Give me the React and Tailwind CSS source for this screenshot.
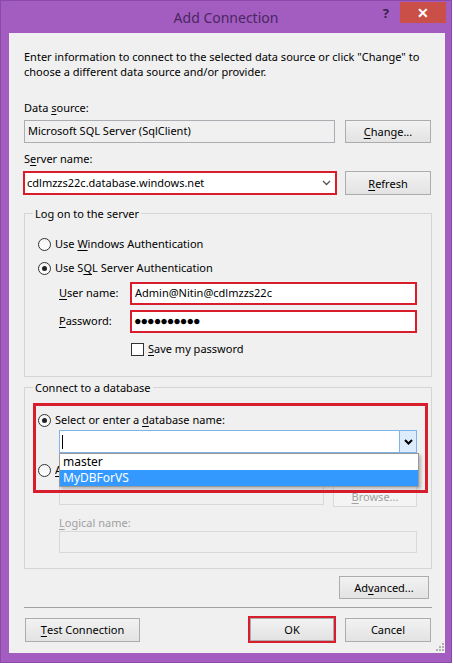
import React from 'react';

const FONT = "font-['Noto_Sans','Open_Sans',sans-serif]";

function U({ children }) {
  return <span className="underline underline-offset-[2px] decoration-[1px]">{children}</span>;
}

function Btn({ children, className = '', disabled }) {
  return (
    <div
      className={`flex items-center justify-center border leading-none ${
        disabled
          ? 'border-[#d9d9d9] bg-[#f4f4f4] text-[#a0a0a0]'
          : 'border-[#acacac] bg-linear-to-b from-[#f2f2f2] to-[#e3e3e3] text-black'
      } ${className}`}
    >
      {children}
    </div>
  );
}

function Radio({ checked }) {
  return (
    <span className="flex h-[13px] w-[13px] shrink-0 items-center justify-center rounded-full border border-[#333] bg-linear-to-b from-[#f4f4f4] to-white">
      {checked && <span className="h-[5px] w-[5px] rounded-full bg-[#222]" />}
    </span>
  );
}

function Chevron({ className = '', bold }) {
  return (
    <svg width="9" height="6" viewBox="0 0 9 6" className={className}>
      <path
        d="M1 1 L4.5 4.5 L8 1"
        fill="none"
        stroke="currentColor"
        strokeWidth={bold ? 2 : 1.3}
      />
    </svg>
  );
}

export default function App() {
  return (
    <div className={`h-[667px] w-[453px] bg-white text-[11px] text-black ${FONT}`}>
      <div className="flex h-[663px] w-[452px] flex-col border border-[#8c4aa8] bg-[#a35cc0]">
        {/* Title bar */}
        <div className="relative flex h-[32px] shrink-0 items-start">
          <div className="flex-1 pt-[7px] text-center text-[14px] leading-[20px] text-[#4a2760]">
            Add Connection
          </div>
          <div className="absolute right-[62px] top-[3px] text-[13px] font-bold leading-[18px] text-[#3a1f4c]">?</div>
          <div className="absolute right-[5px] top-[1px] flex h-[21px] w-[46px] items-center justify-center bg-[#c94f48] text-[14px] font-bold leading-none text-white">
            ✕
          </div>
        </div>

        {/* Client area */}
        <div className="ml-[8px] flex h-[620px] w-[436px] flex-col bg-[#f0f0f0] pl-[15px] pr-[13px]">
          <p className="mt-[16px] whitespace-nowrap leading-[15px]">
            Enter information to connect to the selected data source or click "Change" to
            <br />
            choose a different data source and/or provider.
          </p>

          <div className="mt-[21px] leading-[15px]">
            Data <U>s</U>ource:
          </div>
          <div className="mt-[5px] flex h-[23px] items-stretch">
            <div className="flex w-[311px] items-center border border-[#abadb3] bg-[#f0f0f0] pl-[3px]">
              Microsoft SQL Server (SqlClient)
            </div>
            <Btn className="ml-auto mr-[1px] w-[86px]">
              <U>C</U>hange...
            </Btn>
          </div>

          <div className="mt-[8px] leading-[15px]">
            S<U>e</U>rver name:
          </div>
          <div className="mt-[5px] flex h-[24px] items-stretch">
            <div className="-ml-[1px] flex w-[314px] items-center border-2 border-[#d81e2c] bg-white pl-[2px] pr-[4px]">
              <span className="flex-1">cdlmzzs22c.database.windows.net</span>
              <Chevron className="text-[#555]" />
            </div>
            <Btn className="ml-auto mr-[1px] w-[86px]">
              <U>R</U>efresh
            </Btn>
          </div>

          {/* Log on group */}
          <fieldset className="mt-[11px] border border-[#d5d5d5] px-[13px] pb-[20px]">
            <legend className="-ml-[5px] px-[2px] leading-[15px]">Log on to the server</legend>
            <div className="mt-[15px] flex h-[16px] items-center gap-[4px]">
              <Radio />
              <span>
                Use <U>W</U>indows Authentication
              </span>
            </div>
            <div className="mt-[8px] flex h-[16px] items-center gap-[4px]">
              <Radio checked />
              <span>
                Use S<U>Q</U>L Server Authentication
              </span>
            </div>
            <div className="mt-[6px] flex h-[23px] items-center">
              <span className="ml-[21px] w-[72px]">
                <U>U</U>ser name:
              </span>
              <div className="-ml-[1px] flex h-full w-[287px] items-center border-2 border-[#d81e2c] bg-white pl-[3px]">
                Admin@Nitin@cdlmzzs22c
              </div>
            </div>
            <div className="mt-[5px] flex h-[23px] items-center">
              <span className="ml-[21px] w-[72px]">
                <U>P</U>assword:
              </span>
              <div className="-ml-[1px] flex h-full w-[287px] items-center border-2 border-[#d81e2c] bg-white pl-[2px] text-[12.5px] tracking-[-1px]">
                ●●●●●●●●●●
              </div>
            </div>
            <div className="mt-[9px] ml-[93px] flex h-[14px] items-center gap-[4px]">
              <span className="h-[13px] w-[13px] border border-[#333] bg-white" />
              <span>
                <U>S</U>ave my password
              </span>
            </div>
          </fieldset>

          {/* Connect group */}
          <fieldset className="relative mt-[3px] border border-[#d5d5d5] px-[13px] pb-[15px]">
            <legend className="-ml-[5px] px-[2px] leading-[15px]">Connect to a database</legend>

            <div className="mt-[17px] flex h-[16px] items-center gap-[4px]">
              <Radio checked />
              <span>
                Select or enter a <U>d</U>atabase name:
              </span>
            </div>
            <div className="relative z-10 mt-[2px] ml-[21px] flex h-[23px] w-[358px] items-stretch border border-[#7eb4ea] bg-white">
              <span className="ml-[2px] mt-[4px] h-[14px] w-[1px] bg-black" />
              <div className="ml-auto flex w-[17px] items-center justify-center border-l border-[#7eb4ea] bg-[#dcecfc]">
                <Chevron bold className="text-black" />
              </div>
              {/* open dropdown list */}
              <div className="absolute left-[-1px] top-[22px] w-[360px] border border-[#9a9a9a] bg-white text-[12px] shadow-[2px_2px_3px_rgba(0,0,0,0.25)]">
                <div className="h-[16px] pl-[3px] leading-[16px]">master</div>
                <div className="h-[16px] bg-[#3399ff] pl-[3px] leading-[16px] text-white">MyDBForVS</div>
              </div>
            </div>

            <div className="mt-[9px] flex h-[16px] items-center gap-[4px]">
              <Radio />
              <span>
                <U>A</U>ttach a database file:
              </span>
            </div>
            <div className="mt-[4px] ml-[21px] flex items-start">
              <div className="h-[23px] w-[265px] border border-[#d9d9d9] bg-[#f0f0f0]" />
              <Btn disabled className="ml-[9px] mt-[3px] h-[22px] w-[84px]">
                <U>B</U>rowse...
              </Btn>
            </div>
            <div className="mt-[8px] ml-[21px] leading-[15px] text-[#a0a0a0]">
              <U>L</U>ogical name:
            </div>
            <div className="mt-[1px] ml-[21px] h-[22px] w-[358px] border border-[#d9d9d9] bg-[#f0f0f0]" />

            {/* highlight around database section */}
            <div className="pointer-events-none absolute left-[8px] top-[8px] h-[90px] w-[395px] border-[3px] border-[#d81e2c]" />
          </fieldset>

          <div className="mt-[7px] flex justify-end">
            <Btn className="mr-[3px] h-[23px] w-[90px]">
              Ad<U>v</U>anced...
            </Btn>
          </div>

          <div className="mt-[8px] h-[1px] bg-[#a0a0a0]" />

          <div className="mt-[8px] flex h-[27px] items-center">
            <Btn className="ml-[1px] h-[24px] w-[115px]">
              <U>T</U>est Connection
            </Btn>
            <div className="ml-[108px] flex h-[27px] w-[88px] items-center justify-center border-2 border-[#d81e2c]">
              <Btn className="h-[23px] w-[84px]">OK</Btn>
            </div>
            <Btn className="ml-[9px] h-[24px] w-[86px]">Cancel</Btn>
          </div>

          <div className="mt-auto mb-[2px] -mr-[12px] flex justify-end">
            <svg width="8" height="8" viewBox="0 0 8 8">
              <g fill="#b0b0b0">
                <rect x="6" y="0" width="2" height="2" />
                <rect x="3" y="3" width="2" height="2" />
                <rect x="6" y="3" width="2" height="2" />
                <rect x="0" y="6" width="2" height="2" />
                <rect x="3" y="6" width="2" height="2" />
                <rect x="6" y="6" width="2" height="2" />
              </g>
            </svg>
          </div>
        </div>
      </div>
    </div>
  );
}
